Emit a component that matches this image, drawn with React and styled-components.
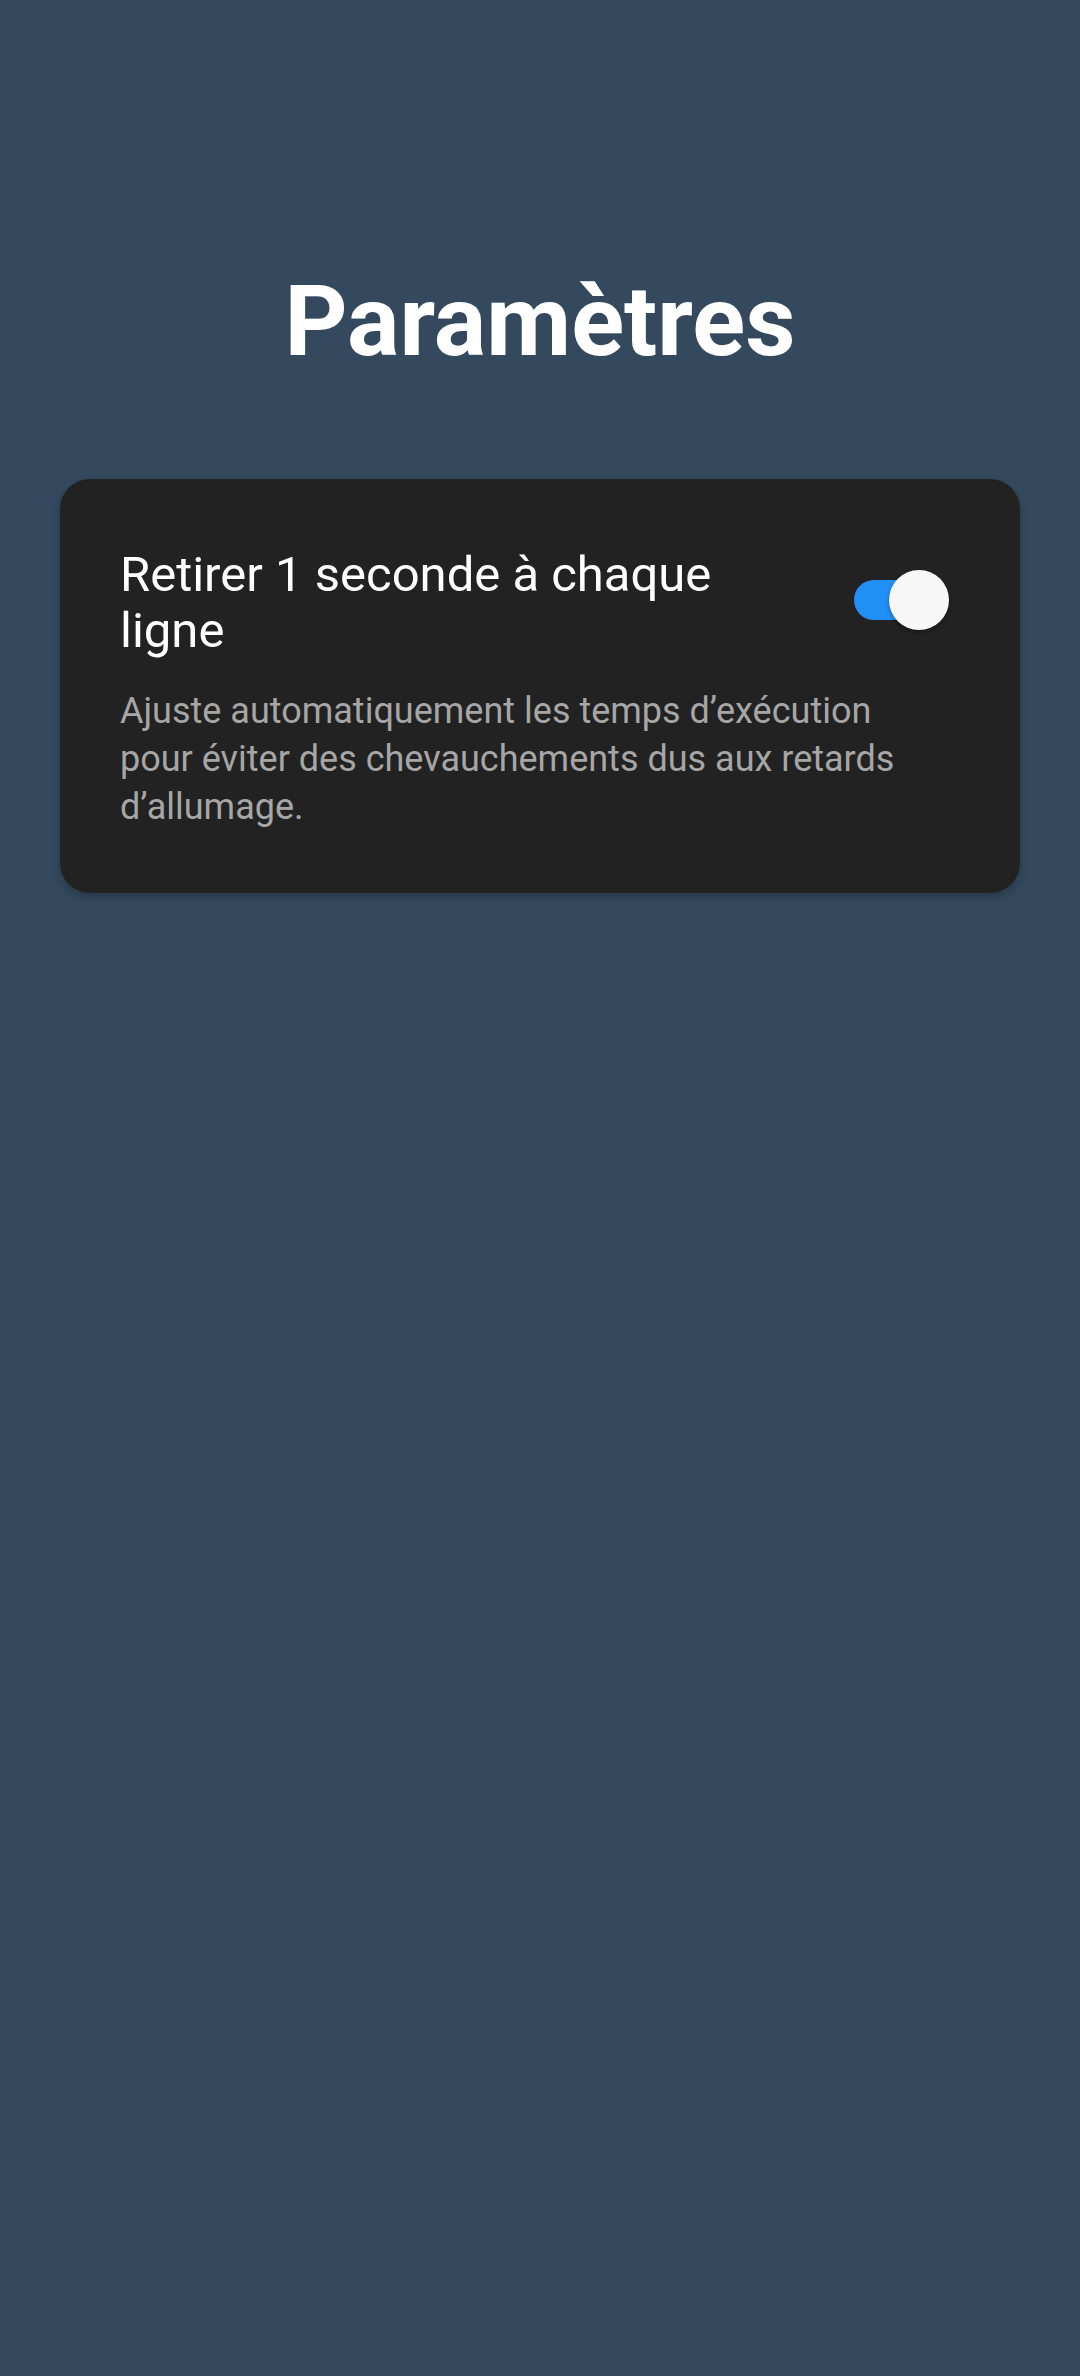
import React, { useState } from "react";
import styled, { createGlobalStyle } from "styled-components";

const Global = createGlobalStyle`
  html, body { margin: 0; padding: 0; background: #34495e; }
  body { font-family: Roboto, "Noto Sans", Arial, sans-serif; }
  * { box-sizing: border-box; }
`;

const Page = styled.div`
  min-height: 2376px;
  background: #34495e;
  padding: 264px 60px 0;
  display: flex;
  flex-direction: column;
`;

const Heading = styled.h1`
  margin: 0 0 100px;
  height: 115px;
  text-align: center;
  color: #ffffff;
  font-size: 98px;
  font-weight: 700;
  line-height: normal;
`;

const Card = styled.section`
  background: #222222;
  border-radius: 30px;
  padding: 68px 60px 62px;
  box-shadow: 0 4px 10px rgba(0, 0, 0, 0.25);
  display: flex;
  flex-direction: column;
  gap: 28px;
`;

const Row = styled.div`
  display: flex;
  align-items: center;
  gap: 64px;
`;

const Label = styled.div`
  flex: 1;
  color: #ffffff;
  font-size: 49px;
  line-height: 56px;
`;

const Description = styled.p`
  margin: 0;
  padding-right: 24px;
  color: #a6a6a6;
  font-size: 36px;
  line-height: 48px;
`;

const SwitchBox = styled.button`
  position: relative;
  width: 96px;
  height: 60px;
  padding: 0;
  border: none;
  background: transparent;
  margin: 0 10px 6px 0;
  cursor: pointer;
  flex-shrink: 0;
`;

const Track = styled.span`
  position: absolute;
  left: 0;
  top: 10px;
  width: 80px;
  height: 40px;
  border-radius: 20px;
  background: ${(p) => (p.$on ? "#2190f6" : "#777")};
`;

const Thumb = styled.span`
  position: absolute;
  top: 0;
  left: ${(p) => (p.$on ? "35px" : "0px")};
  width: 60px;
  height: 60px;
  border-radius: 50%;
  background: #f7f7f7;
  box-shadow: 0 2px 4px rgba(0, 0, 0, 0.35);
`;

export default function App() {
  const [on, setOn] = useState(true);
  return (
    <>
      <Global />
      <Page>
        <Heading>Paramètres</Heading>
        <Card>
          <Row>
            <Label>Retirer 1 seconde à chaque ligne</Label>
            <SwitchBox onClick={() => setOn(!on)} aria-pressed={on}>
              <Track $on={on} />
              <Thumb $on={on} />
            </SwitchBox>
          </Row>
          <Description>
            Ajuste automatiquement les temps d’exécution pour éviter des chevauchements dus aux retards d’allumage.
          </Description>
        </Card>
      </Page>
    </>
  );
}
